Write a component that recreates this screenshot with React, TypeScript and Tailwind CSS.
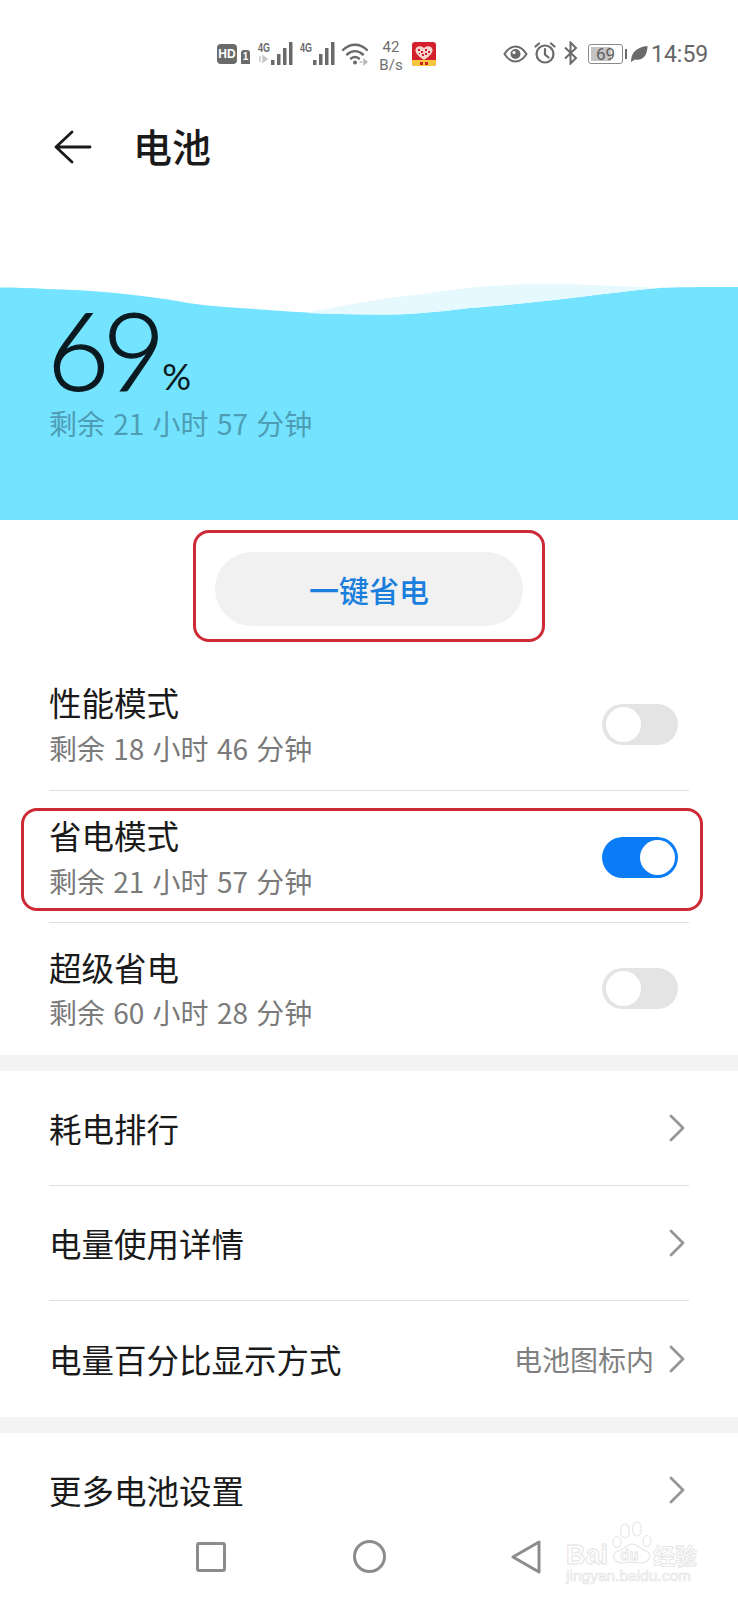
// App.tsx
const CJK = "font-['Noto_Sans_CJK_SC','Noto_Sans',sans-serif]";

function Signal({ sim2 }: { sim2?: boolean }) {
  return (
    <svg width="38" height="26" viewBox="0 0 38 26" className="block">
      <text x="0" y="11" fontSize="13" fontWeight="700" fill="#6a6a6a" fontFamily="Liberation Sans" textLength="12" lengthAdjust="spacingAndGlyphs">4G</text>
      {sim2 ? null : <path d="M2 15v6M5 15l4 3-4 3z" stroke="#c8c8c8" strokeWidth="1.5" fill="#c8c8c8" />}
      <rect x="13" y="19" width="3.5" height="5" fill="#6a6a6a" />
      <rect x="19" y="13" width="3.5" height="11" fill="#6a6a6a" />
      <rect x="25" y="7" width="3.5" height="17" fill="#6a6a6a" />
      <rect x="31" y="1" width="3.5" height="23" fill="#6a6a6a" />
    </svg>
  );
}

function StatusBar() {
  return (
    <div className="h-[100px] shrink-0 flex items-start pt-[42px] pl-[217px] text-[#666666]">
      {/* left icons */}
      <div className="w-[20px] h-[20px] rounded-[4px] bg-[#6a6a6a] text-white text-[12px] font-bold leading-[20px] text-center font-['Liberation_Sans',sans-serif] mt-[2px]">
        HD
      </div>
      <div className="w-[9px] h-[14px] ml-[4px] mt-[8px] rounded-t-[3px] bg-[#6a6a6a] text-white text-[10px] font-bold leading-[14px] text-center font-['Liberation_Sans',sans-serif]">
        1
      </div>
      <div className="ml-[8px] mt-[-1px]">
        <Signal />
      </div>
      <div className="ml-[4px] mt-[-1px]">
        <Signal sim2 />
      </div>
      <svg width="28" height="24" viewBox="0 0 28 24" className="ml-[3px] mt-[0px] block" fill="none" stroke="#6a6a6a" strokeWidth="2.4" strokeLinecap="round">
        <path d="M2 8C9 1 19 1 26 8" />
        <path d="M6 12.5C11 8 17 8 22 12.5" />
        <path d="M10 16.5C12.5 14.5 15.5 14.5 18 16.5" />
        <circle cx="14" cy="20.5" r="2" fill="#6a6a6a" stroke="none" />
        <path d="M19 20h2M23 17.5l3 2.5-3 2.5z" stroke="#b8b8b8" strokeWidth="1.4" fill="#b8b8b8" />
      </svg>
      <div className="w-[44px] mt-[-4px] text-center text-[15px] leading-[18px] font-['Roboto',sans-serif] text-[#6e6e6e]">
        <div>42</div>
        <div>B/s</div>
      </div>
      <svg width="24" height="24" viewBox="0 0 24 24" className="block ml-[-1px]">
        <rect x="0" y="0" width="24" height="24" rx="3" fill="#d3202a" />
        <path d="M0 18h24v3a3 3 0 0 1-3 3H3a3 3 0 0 1-3-3z" fill="#f8c83c" />
        <path d="M12 18C6 14 3 11 3.500 7.500 4 4 9 3 12 6c3-3 8-2 8.500 1.500C21 11 18 14 12 18z" fill="#f6d4d0" />
        <path d="M6 7h2v2H6zM9 9h2v2H9zM13 7h2v2h-2zM16 9h2v2h-2zM10 12h2v2h-2zM13 11h2v2h-2zM7 11h1v1H7z" fill="#d3202a" />
        <path d="M8 20h3v3H8zM13 20h3v3h-3z" fill="#d3202a" />
      </svg>

      {/* right icons */}
      <svg width="25" height="18" viewBox="0 0 25 18" className="block ml-[67px] mt-[3px]">
        <path d="M1.500 9C5 3.500 9 1.500 12.500 1.500S20 3.500 23.500 9C20 14.500 16 16.500 12.500 16.500S5 14.500 1.500 9z" fill="none" stroke="#6a6a6a" strokeWidth="2" />
        <circle cx="12.500" cy="9" r="5" fill="#6a6a6a" />
        <circle cx="11" cy="7.500" r="1.600" fill="#fff" />
      </svg>
      <svg width="22" height="24" viewBox="0 0 22 24" className="block ml-[6px] mt-[-1px]" fill="none" stroke="#6a6a6a" strokeWidth="2.200" strokeLinecap="round">
        <circle cx="11" cy="13" r="8.500" />
        <path d="M11 8v5.500l3.500 3M1.500 5.500L5 2.500M20.500 5.500L17 2.500" />
      </svg>
      <svg width="14" height="24" viewBox="0 0 14 24" className="block ml-[8px] mt-[-1px]" fill="none" stroke="#6a6a6a" strokeWidth="2">
        <path d="M1 6.500l11 10.500-5.500 5.500V1.500L12 7 1 17.500" />
      </svg>
      <div className="ml-[10px] mt-[2px] relative w-[35px] h-[20px] border border-[#8a8a8a] rounded-[3px] bg-white p-[2px]">
        <div className="h-full w-[69%] bg-[#c4c4c4]" />
        <div className="absolute inset-0 text-center text-[17px] leading-[18px] text-[#5f5f5f] font-['Roboto',sans-serif]">69</div>
      </div>
      <div className="w-[2px] h-[10px] bg-[#6a6a6a] ml-[2px] mt-[7px]" />
      <svg width="18" height="18" viewBox="0 0 18 18" className="block ml-[3px] mt-[3px]">
        <path d="M1 17C1 8 6 2 17.500 1 17.500 10 13 16 5 14.500L1 17z" fill="#6a6a6a" />
      </svg>
      <div className="ml-[3px] mt-[-1px] text-[23px] leading-[27px] font-['Roboto',sans-serif] text-[#666666]">14:59</div>
    </div>
  );
}

function Toggle({ on }: { on?: boolean }) {
  return (
    <div className={`w-[76px] h-[41px] rounded-full flex items-center px-[3.500px] ${on ? "bg-[#0A7CF5] justify-end" : "bg-[#E4E4E4] justify-start"}`}>
      <div className="w-[35px] h-[35px] rounded-full bg-white" />
    </div>
  );
}

function ModeRow({ title, sub, on, last, h }: { title: string; sub: string; on?: boolean; last?: boolean; h: string }) {
  return (
    <div className="px-[49px] shrink-0">
      <div className={`flex justify-between pt-[21px] ${h} ${last ? "" : "border-b border-[#DEDEDE]"}`}>
        <div>
          <div className="text-[32.500px] leading-[46px] text-[#1a1a1a]">{title}</div>
          <div className={`text-[28px] text-[#7a7a7a] [word-spacing:2px] ${last ? "leading-[44px]" : "leading-[46px]"}`}>{sub}</div>
        </div>
        <div className={`mr-[11px] ${last ? "mt-[24px]" : "mt-[25px]"}`}>
          <Toggle on={on} />
        </div>
      </div>
    </div>
  );
}

function Chevron() {
  return (
    <svg width="16" height="28" viewBox="0 0 16 28" className="block" fill="none" stroke="#969696" strokeWidth="2.800" strokeLinecap="round" strokeLinejoin="round">
      <path d="M2 2l12 12L2 26" />
    </svg>
  );
}

function LinkRow({ label, value, last }: { label: string; value?: string; last?: boolean }) {
  return (
    <div className="px-[49px] shrink-0">
      <div className={`flex items-center justify-between ${last ? "h-[116px]" : "h-[115px] border-b border-[#DEDEDE]"}`}>
        <div className="text-[32.500px] text-[#1a1a1a]">{label}</div>
        <div className="flex items-center gap-[15px] pr-[4px]">
          {value && <span className="text-[28px] text-[#808080]">{value}</span>}
          <Chevron />
        </div>
      </div>
    </div>
  );
}

function Watermark() {
  return (
    <div className="absolute left-[566px] top-[1520px] w-[134px] h-[64px]">
      <svg width="134" height="46" viewBox="0 0 134 46" className="absolute left-0 top-0" fill="none" stroke="#e6e6e6" strokeWidth="1.200">
        <ellipse cx="59" cy="11" rx="4.500" ry="7" />
        <ellipse cx="71" cy="9" rx="4.500" ry="7" />
        <ellipse cx="51" cy="22" rx="4" ry="5.500" />
        <ellipse cx="81" cy="21" rx="4" ry="5.500" />
        <path d="M58 43C46 43 44 33 55 30 60 28 61 24 66 24 71 24 73 28 78 30 88 34 84 43 74 43 69 42 63 42 58 43z" />
      </svg>
      <span className="absolute left-0 top-[20px] text-[27px] leading-[30px] font-bold font-['Liberation_Sans',sans-serif] text-white [-webkit-text-stroke:1px_#e4e4e4]">Bai</span>
      <span className="absolute left-[54px] top-[26px] text-[15px] leading-[18px] font-bold font-['Liberation_Sans',sans-serif] text-white [-webkit-text-stroke:0.8px_#e4e4e4]">du</span>
      <span className={`absolute left-[87px] top-[21px] text-[22px] leading-[26px] font-bold text-white [-webkit-text-stroke:0.8px_#e4e4e4] ${CJK}`}>经验</span>
      <span className="absolute left-0 top-[47px] text-[15.500px] leading-[18px] font-['Liberation_Sans',sans-serif] text-white [-webkit-text-stroke:0.7px_#e4e4e4]">jingyan.baidu.com</span>
    </div>
  );
}

export default function App() {
  return (
    <div className={`relative w-[738px] h-[1600px] overflow-hidden bg-white flex flex-col ${CJK}`}>
      <StatusBar />

      {/* Header */}
      <div className="h-[94px] shrink-0 flex items-center pl-[54px]">
        <svg width="38" height="34" viewBox="0 0 38 34" fill="none" stroke="#1a1a1a" strokeWidth="2.800" strokeLinecap="round" strokeLinejoin="round" className="block">
          <path d="M18 2L2 17l16 15M2 17h34" />
        </svg>
        <div className="ml-[41px] mb-[4px] text-[39px] font-medium text-[#1a1a1a] leading-[50px]">电池</div>
      </div>

      <div className="h-[90px] shrink-0" />

      {/* Battery panel */}
      <div className="relative h-[236px] shrink-0 bg-[#73E3FF] pl-[49px]">
        <svg width="738" height="34" viewBox="0 0 738 34" className="absolute left-0 top-0 block">
          <path d="M0 0H738V3C700 3 680 3 659 4C620 7 560 17 470 24C430 29 400 31 376 30.500C340 30 310 29 282 27C250 24 220 24 188 19C140 10 90 6 47 5C30 4 15 3.500 0 3.500Z" fill="#fff" />
          <path d="M305 29C340 22 390 13 423 10C455 5 500 0 540 0C580 0 620 2 659 4C620 7 560 17 470 24C430 29 400 31 376 30.500C350 30.500 325 30 305 29Z" fill="#E5F9FF" />
        </svg>
        <div className="relative flex items-end h-[116px] pt-[12px]">
          <span className="ml-[-2px] font-['Lato',sans-serif] font-light text-[#0a1a20] text-[108px] leading-[102px] tracking-[-7px] [-webkit-text-stroke:1.200px_#0a1a20]">69</span>
          <span className="font-['Lato',sans-serif] font-normal text-[#0a1a20] text-[36px] leading-[46px] ml-[4px] mb-[1px]">%</span>
        </div>
        <div className="relative text-[28px] leading-[46px] text-[#4E9DB5] [word-spacing:2px]">剩余 21 小时 57 分钟</div>
      </div>

      {/* One tap saver */}
      <div className="h-[138px] shrink-0 flex justify-center pt-[32px]">
        <div className="relative w-[308px] h-[74px]">
          <div className="h-full rounded-full bg-[#F1F1F1] flex items-center justify-center text-[30px] font-medium text-[#1A7FDC]">
            一键省电
          </div>
          <div className="absolute left-[-22px] right-[-22px] top-[-22px] bottom-[-16px] border-[3px] border-[#CE2A35] rounded-[16px]" />
        </div>
      </div>

      {/* Modes */}
      <ModeRow title="性能模式" sub="剩余 18 小时 46 分钟" h="h-[133px]" />
      <div className="relative shrink-0">
        <ModeRow title="省电模式" sub="剩余 21 小时 57 分钟" on h="h-[132px]" />
        <div className="absolute left-[21px] w-[682px] top-[17px] h-[103px] border-[3px] border-[#CE2A35] rounded-[16px]" />
      </div>
      <ModeRow title="超级省电" sub="剩余 60 小时 28 分钟" last h="h-[132px]" />

      <div className="h-[16px] bg-[#F3F3F3] shrink-0" />

      <LinkRow label="耗电排行" />
      <LinkRow label="电量使用详情" />
      <LinkRow label="电量百分比显示方式" value="电池图标内" last />

      <div className="h-[16px] bg-[#F3F3F3] shrink-0" />

      <div className="px-[49px] h-[97px] pt-[12px] shrink-0">
        <div className="flex items-center justify-between h-[90px]">
          <div className="text-[32.500px] text-[#1a1a1a]">更多电池设置</div>
          <div className="pr-[4px]">
            <Chevron />
          </div>
        </div>
      </div>

      {/* Nav bar */}
      <div className="h-[70px] shrink-0 relative flex items-start pt-[10px] pl-[196px]">
        <div className="w-[30px] h-[30px] mt-[2px] border-[3px] border-[#8c8c8c] rounded-[3px]" />
        <div className="w-[33px] h-[33px] ml-[127px] border-[3px] border-[#8c8c8c] rounded-full" />
        <svg width="30" height="34" viewBox="0 0 30 34" fill="none" stroke="#8c8c8c" strokeWidth="3" strokeLinejoin="round" className="block ml-[125px]">
          <path d="M28 2V32L2 17Z" />
        </svg>
      </div>

      <Watermark />
    </div>
  );
}
